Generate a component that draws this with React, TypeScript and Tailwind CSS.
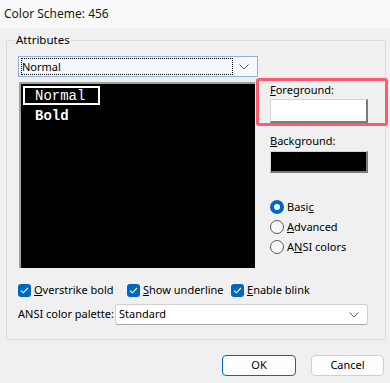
import React from "react";

const Chevron = () => (
  <svg width="10" height="6" viewBox="0 0 10 6" fill="none">
    <path d="M0.5 0.5 L5 5 L9.5 0.5" stroke="#606060" strokeWidth="1" />
  </svg>
);

const Check = () => (
  <span className="flex h-[13px] w-[13px] shrink-0 items-center justify-center rounded-[3px] bg-[#0067c0]">
    <svg width="9" height="7" viewBox="0 0 9 7" fill="none">
      <path d="M1 3.6 L3.3 5.8 L8 1" stroke="#ffffff" strokeWidth="1.1" />
    </svg>
  </span>
);

const Radio = ({ on }: { on?: boolean }) =>
  on ? (
    <span className="flex h-[14px] w-[14px] items-center justify-center rounded-full bg-[#0067c0]">
      <span className="h-[6px] w-[6px] rounded-full bg-white" />
    </span>
  ) : (
    <span className="h-[14px] w-[14px] rounded-full border border-[#5a5a5a] bg-[#f7f7f7]" />
  );

export default function App() {
  return (
    <div
      className="w-[390px] h-[383px] bg-[#f0f0f0] text-[11px] text-black overflow-hidden whitespace-nowrap"
      style={{ fontFamily: '"Noto Sans", "Open Sans", sans-serif' }}
    >
      {/* title bar */}
      <div className="h-[28px] bg-[#f9f9f9] flex items-center pl-[4px] text-[12px] text-[#1a1a1a]">
        Color Scheme: 456
      </div>

      {/* Attributes group */}
      <div className="relative ml-[6px] mt-[12px] w-[380px] h-[300px] border border-[#dcdcdc] pl-[11px] pt-[15px]">
        <span className="absolute -top-[10px] left-[8px] px-[1px] bg-[#f0f0f0] leading-[18px] text-[11.5px]">
          Attributes
        </span>

        {/* scheme select */}
        <div className="flex h-[21px] w-[240px] items-center border border-[#8fb3dc] bg-[#f4f8fc] pl-[2px] pr-[8px]">
          <div className="flex h-[17px] flex-1 items-center border border-dotted border-black leading-none">
            Normal
          </div>
          <div className="ml-[6px]">
            <Chevron />
          </div>
        </div>

        <div className="mt-[5px] flex">
          {/* preview list */}
          <div
            className="ml-[1px] h-[186px] w-[236px] border-t-2 border-l-2 border-[#a0a0a0] bg-black pt-[2px] pl-[2px] text-white"
            style={{ fontFamily: '"Liberation Mono", "DejaVu Sans Mono", monospace' }}
          >
            <div className="flex h-[19px] w-[77px] items-center border-2 border-white pl-[10px] text-[14px] leading-none">
              Normal
            </div>
            <div className="flex h-[21px] items-center pl-[12px] text-[14px] font-bold leading-none">
              Bold
            </div>
          </div>

          {/* right column */}
          <div className="ml-[15px] w-[98px]">
            <div className="leading-[16px]">
              <u>F</u>oreground:
            </div>
            <div className="mt-[1px] h-[24px] w-[98px] border-t border-l border-[#d4d4d4] border-b-2 border-r-2 border-b-[#7a7a7a] border-r-[#7a7a7a] bg-white" />
            <div className="mt-[10px] leading-[16px]">
              <u>B</u>ackground:
            </div>
            <div className="mt-[2px] h-[22px] w-[98px] border-t border-l border-[#d4d4d4] border-b-2 border-r-2 border-b-[#7a7a7a] border-r-[#7a7a7a] bg-black" />

            <div className="mt-[27px] flex flex-col gap-[6px]">
              <div className="flex items-center gap-[3px] h-[14px]">
                <Radio on />
                <span>
                  Basi<u>c</u>
                </span>
              </div>
              <div className="flex items-center gap-[3px] h-[14px]">
                <Radio />
                <span>
                  <u>A</u>dvanced
                </span>
              </div>
              <div className="flex items-center gap-[3px] h-[14px]">
                <Radio />
                <span>
                  A<u>N</u>SI colors
                </span>
              </div>
            </div>
          </div>
        </div>

        {/* checkboxes */}
        <div className="mt-[15px] flex h-[14px] items-center">
          <div className="flex w-[109px] items-center gap-[3px]">
            <Check />
            <span>
              <u>O</u>verstrike bold
            </span>
          </div>
          <div className="flex w-[104px] items-center gap-[3px]">
            <Check />
            <span>
              <u>S</u>how underline
            </span>
          </div>
          <div className="flex items-center gap-[3px]">
            <Check />
            <span>
              <u>E</u>nable blink
            </span>
          </div>
        </div>

        {/* palette */}
        <div className="mt-[7px] flex items-center">
          <span className="w-[97px]">ANSI color palette:</span>
          <div className="flex h-[21px] w-[253px] items-center justify-between rounded-[3px] border border-[#d0d0d0] border-b-[#a8a8a8] bg-white pl-[3px] pr-[8px]">
            <span>Standard</span>
            <Chevron />
          </div>
        </div>

        {/* highlight overlay */}
        <div className="pointer-events-none absolute left-[249px] top-[37px] h-[48px] w-[132px] rounded-[3px] border-[3px] border-[#ff5a6e]" />
      </div>

      {/* buttons */}
      <div className="mt-[15px] flex justify-end gap-[15px] pr-[6px]">
        <button className="h-[21px] w-[74px] rounded-[4px] border border-[#0067c0] bg-[#fdfdfd]">
          OK
        </button>
        <button className="h-[21px] w-[73px] rounded-[4px] border border-[#d0d0d0] bg-[#fdfdfd]">
          Cancel
        </button>
      </div>
    </div>
  );
}
